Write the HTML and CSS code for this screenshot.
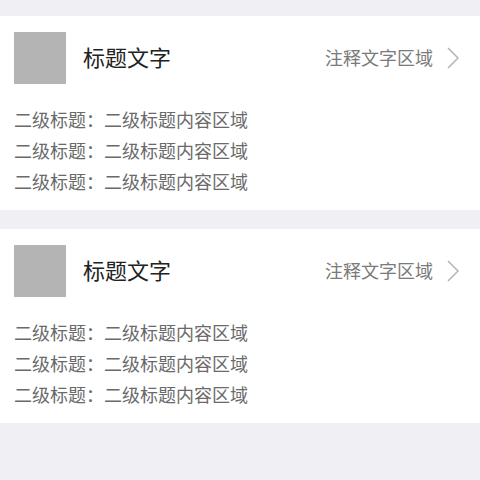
FILE: index.html
```html
<!DOCTYPE html>
<html lang="zh-CN">
<head>
    <meta charset="UTF-8">
    <title>列表卡片</title>
    <link rel="stylesheet" href="styles.css">
</head>
<body>

<div class="list">
    <div class="card">
        <div class="card-head">
            <div class="thumb"></div>
            <div class="title">标题文字</div>
            <div class="note">注释文字区域</div>
            <svg class="arrow" width="14" height="24" viewBox="0 0 14 24">
                <path d="M2 2 L12 12 L2 22" fill="none" stroke="#b5b5b5" stroke-width="1.5"/>
            </svg>
        </div>
        <div class="sub">二级标题：二级标题内容区域</div>
        <div class="sub">二级标题：二级标题内容区域</div>
        <div class="sub">二级标题：二级标题内容区域</div>
    </div>

    <div class="card">
        <div class="card-head">
            <div class="thumb"></div>
            <div class="title">标题文字</div>
            <div class="note">注释文字区域</div>
            <svg class="arrow" width="14" height="24" viewBox="0 0 14 24">
                <path d="M2 2 L12 12 L2 22" fill="none" stroke="#b5b5b5" stroke-width="1.5"/>
            </svg>
        </div>
        <div class="sub">二级标题：二级标题内容区域</div>
        <div class="sub">二级标题：二级标题内容区域</div>
        <div class="sub">二级标题：二级标题内容区域</div>
    </div>
</div>

</body>
</html>
```

FILE: styles.css
```css
body {
    margin: 0;
    background: #efeff4;
    font-family: "Noto Sans CJK SC", "Noto Sans", sans-serif;
    height: 480px;
}

.list {
    padding-top: 16px;
    display: flex;
    flex-direction: column;
    gap: 19px;
}

.card {
    background: #fff;
    height: 194px;
    box-sizing: border-box;
    padding: 16px 20px 0 14px;
}

.card-head {
    display: flex;
    align-items: center;
    height: 52px;
    margin-bottom: 20px;
}

.thumb {
    width: 52px;
    height: 52px;
    background: #b4b4b4;
}

.title {
    margin-left: 17px;
    margin-bottom: 4px;
    font-size: 22px;
    color: #222;
    flex: 1;
}

.note {
    margin-bottom: 2px;
    font-size: 18px;
    color: #7a7a7a;
}

.arrow {
    margin-left: 13px;
}

.sub {
    font-size: 18px;
    line-height: 31px;
    color: #6a6a6a;
}
```
